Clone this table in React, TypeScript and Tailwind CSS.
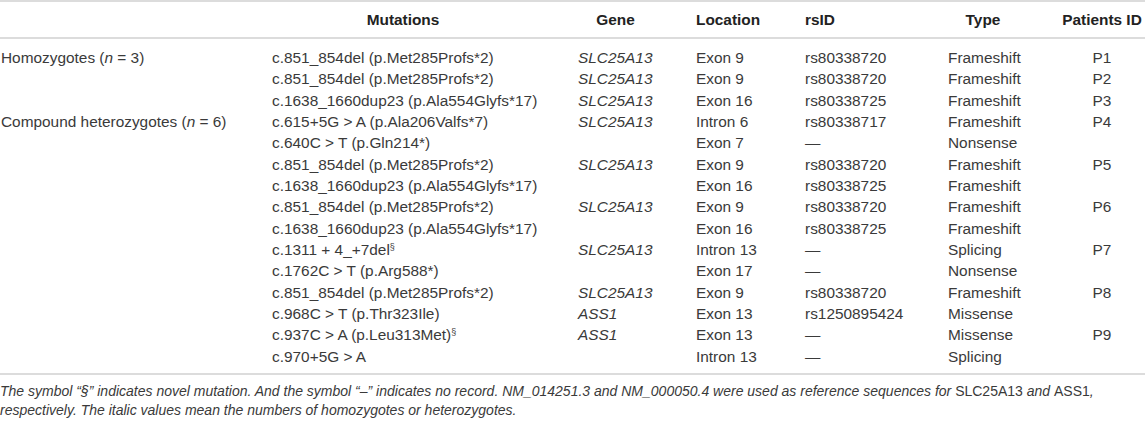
import React from 'react';

type Row = {
  group?: React.ReactNode;
  mutation: React.ReactNode;
  gene?: string;
  location: string;
  rsid: string;
  type: string;
  patient?: string;
};

const Sec = () => <sup className="text-[9px] top-[-0.6em]">§</sup>;

const rows: Row[] = [
  {
    group: (
      <>
        Homozygotes (<i>n</i> = 3)
      </>
    ),
    mutation: 'c.851_854del (p.Met285Profs*2)',
    gene: 'SLC25A13',
    location: 'Exon 9',
    rsid: 'rs80338720',
    type: 'Frameshift',
    patient: 'P1',
  },
  { mutation: 'c.851_854del (p.Met285Profs*2)', gene: 'SLC25A13', location: 'Exon 9', rsid: 'rs80338720', type: 'Frameshift', patient: 'P2' },
  { mutation: 'c.1638_1660dup23 (p.Ala554Glyfs*17)', gene: 'SLC25A13', location: 'Exon 16', rsid: 'rs80338725', type: 'Frameshift', patient: 'P3' },
  {
    group: (
      <>
        Compound heterozygotes (<i>n</i> = 6)
      </>
    ),
    mutation: 'c.615+5G > A (p.Ala206Valfs*7)',
    gene: 'SLC25A13',
    location: 'Intron 6',
    rsid: 'rs80338717',
    type: 'Frameshift',
    patient: 'P4',
  },
  { mutation: 'c.640C > T (p.Gln214*)', location: 'Exon 7', rsid: '—', type: 'Nonsense' },
  { mutation: 'c.851_854del (p.Met285Profs*2)', gene: 'SLC25A13', location: 'Exon 9', rsid: 'rs80338720', type: 'Frameshift', patient: 'P5' },
  { mutation: 'c.1638_1660dup23 (p.Ala554Glyfs*17)', location: 'Exon 16', rsid: 'rs80338725', type: 'Frameshift' },
  { mutation: 'c.851_854del (p.Met285Profs*2)', gene: 'SLC25A13', location: 'Exon 9', rsid: 'rs80338720', type: 'Frameshift', patient: 'P6' },
  { mutation: 'c.1638_1660dup23 (p.Ala554Glyfs*17)', location: 'Exon 16', rsid: 'rs80338725', type: 'Frameshift' },
  {
    mutation: (
      <>
        c.1311 + 4_+7del
        <Sec />
      </>
    ),
    gene: 'SLC25A13',
    location: 'Intron 13',
    rsid: '—',
    type: 'Splicing',
    patient: 'P7',
  },
  { mutation: 'c.1762C > T (p.Arg588*)', location: 'Exon 17', rsid: '—', type: 'Nonsense' },
  { mutation: 'c.851_854del (p.Met285Profs*2)', gene: 'SLC25A13', location: 'Exon 9', rsid: 'rs80338720', type: 'Frameshift', patient: 'P8' },
  { mutation: 'c.968C > T (p.Thr323Ile)', gene: 'ASS1', location: 'Exon 13', rsid: 'rs1250895424', type: 'Missense' },
  {
    mutation: (
      <>
        c.937C &gt; A (p.Leu313Met)
        <Sec />
      </>
    ),
    gene: 'ASS1',
    location: 'Exon 13',
    rsid: '—',
    type: 'Missense',
    patient: 'P9',
  },
  { mutation: 'c.970+5G > A', location: 'Intron 13', rsid: '—', type: 'Splicing' },
];

const cols = 'grid grid-cols-[272px_306px_118px_109px_143px_114px_83px]';

export default function App() {
  return (
    <div
      className="w-[1145px] h-[424px] bg-white text-[#3a3a3a] overflow-hidden"
      style={{ fontFamily: '"Liberation Sans", Arial, sans-serif' }}
    >
      {/* Table */}
      <div className="border-t-2 border-b-2 border-[#dcdcdc]">
        {/* Header */}
        <div className={`${cols} h-[37px] items-center border-b-2 border-[#dcdcdc] text-[15.4px] font-bold text-[#222]`}>
          <div />
          <div className="w-[262px] text-center">Mutations</div>
          <div className="w-[75px] text-center">Gene</div>
          <div>Location</div>
          <div>rsID</div>
          <div className="w-[70px] text-center">Type</div>
          <div className="w-[80px] text-center">Patients ID</div>
        </div>

        {/* Body */}
        <div className="pt-[8px] pb-[5.5px] text-[15.4px] leading-[21.35px]">
          {rows.map((r, i) => (
            <div key={i} className={`${cols} h-[21.35px] whitespace-nowrap`}>
              <div className="pl-px">{r.group}</div>
              <div>{r.mutation}</div>
              <div className="italic">{r.gene}</div>
              <div>{r.location}</div>
              <div>{r.rsid}</div>
              <div>{r.type}</div>
              <div className="w-[80px] text-center">{r.patient}</div>
            </div>
          ))}
        </div>
      </div>

      {/* Footnote */}
      <p className="mt-[7px] text-[14px] leading-[19.5px] italic whitespace-nowrap">
        The symbol “§” indicates novel mutation. And the symbol “–” indicates no record. NM_014251.3 and NM_000050.4 were used as reference sequences for{' '}
        <span className="not-italic">SLC25A13</span> and <span className="not-italic">ASS1</span>,
        <br />
        respectively. The italic values mean the numbers of homozygotes or heterozygotes.
      </p>
    </div>
  );
}
